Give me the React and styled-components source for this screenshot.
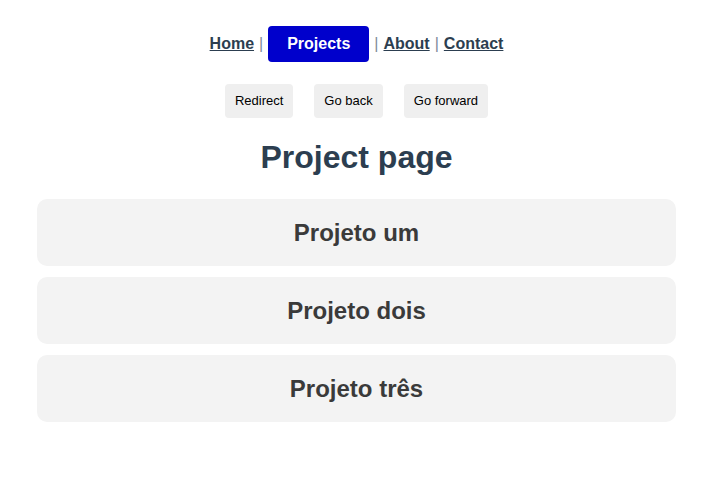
import * as React from 'react';
import styled, { createGlobalStyle } from 'styled-components';

const GlobalStyle = createGlobalStyle`
  body {
    margin: 0;
    background: #fff;
    font-family: 'Liberation Sans', Arial, Helvetica, sans-serif;
    color: #2c3e50;
  }
`;

const Page = styled.div`
  text-align: center;
  padding: 26px 37px 0;
`;

const Nav = styled.nav`
  display: flex;
  justify-content: center;
  align-items: center;
  font-size: 16px;
  font-weight: bold;
  color: #2c3e50;
`;

const NavLink = styled.a`
  display: inline-block;
  line-height: 18px;
  height: ${(p) => (p.$active ? '36px' : 'auto')};
  box-sizing: border-box;
  color: ${(p) => (p.$active ? '#fff' : '#2c3e50')};
  text-decoration: ${(p) => (p.$active ? 'none' : 'underline')};
  background: ${(p) => (p.$active ? '#0000cc' : 'transparent')};
  padding: ${(p) => (p.$active ? '9px 19px' : '0')};
  border-radius: 4px;
  cursor: pointer;
`;

const Sep = styled.span`
  font-weight: normal;
  line-height: 18px;
  color: #7d8a99;
  margin: 0 5px;
`;

const Actions = styled.div`
  display: flex;
  justify-content: center;
  gap: 21px;
  margin-top: 22px;
`;

const ActionButton = styled.button`
  border: none;
  background: #efefef;
  border-radius: 4px;
  height: 34px;
  padding: 0 10px;
  font-family: 'Liberation Sans', Arial, sans-serif;
  font-size: 13px;
  line-height: 16px;
  color: #000;
  cursor: pointer;
`;

const Title = styled.h1`
  font-size: 32px;
  line-height: 37px;
  font-weight: bold;
  margin: 21px 0 23px;
  color: #2c3e50;
`;

const List = styled.div`
  display: flex;
  flex-direction: column;
  gap: 11px;
`;

const Card = styled.div`
  background: #f3f3f3;
  border-radius: 10px;
  height: 67px;
  display: flex;
  align-items: center;
  justify-content: center;
  font-size: 24px;
  font-weight: bold;
  color: #3a3a3a;
`;

const links = ['Home', 'Projects', 'About', 'Contact'];
const projects = ['Projeto um', 'Projeto dois', 'Projeto três'];

export default function App() {
  return (
    <>
      <GlobalStyle />
      <Page>
        <Nav>
          {links.map((l, i) => (
            <React.Fragment key={l}>
              {i > 0 && <Sep>|</Sep>}
              <NavLink $active={l === 'Projects'}>{l}</NavLink>
            </React.Fragment>
          ))}
        </Nav>
        <Actions>
          <ActionButton>Redirect</ActionButton>
          <ActionButton>Go back</ActionButton>
          <ActionButton>Go forward</ActionButton>
        </Actions>
        <Title>Project page</Title>
        <List>
          {projects.map((p) => (
            <Card key={p}>{p}</Card>
          ))}
        </List>
      </Page>
    </>
  );
}
